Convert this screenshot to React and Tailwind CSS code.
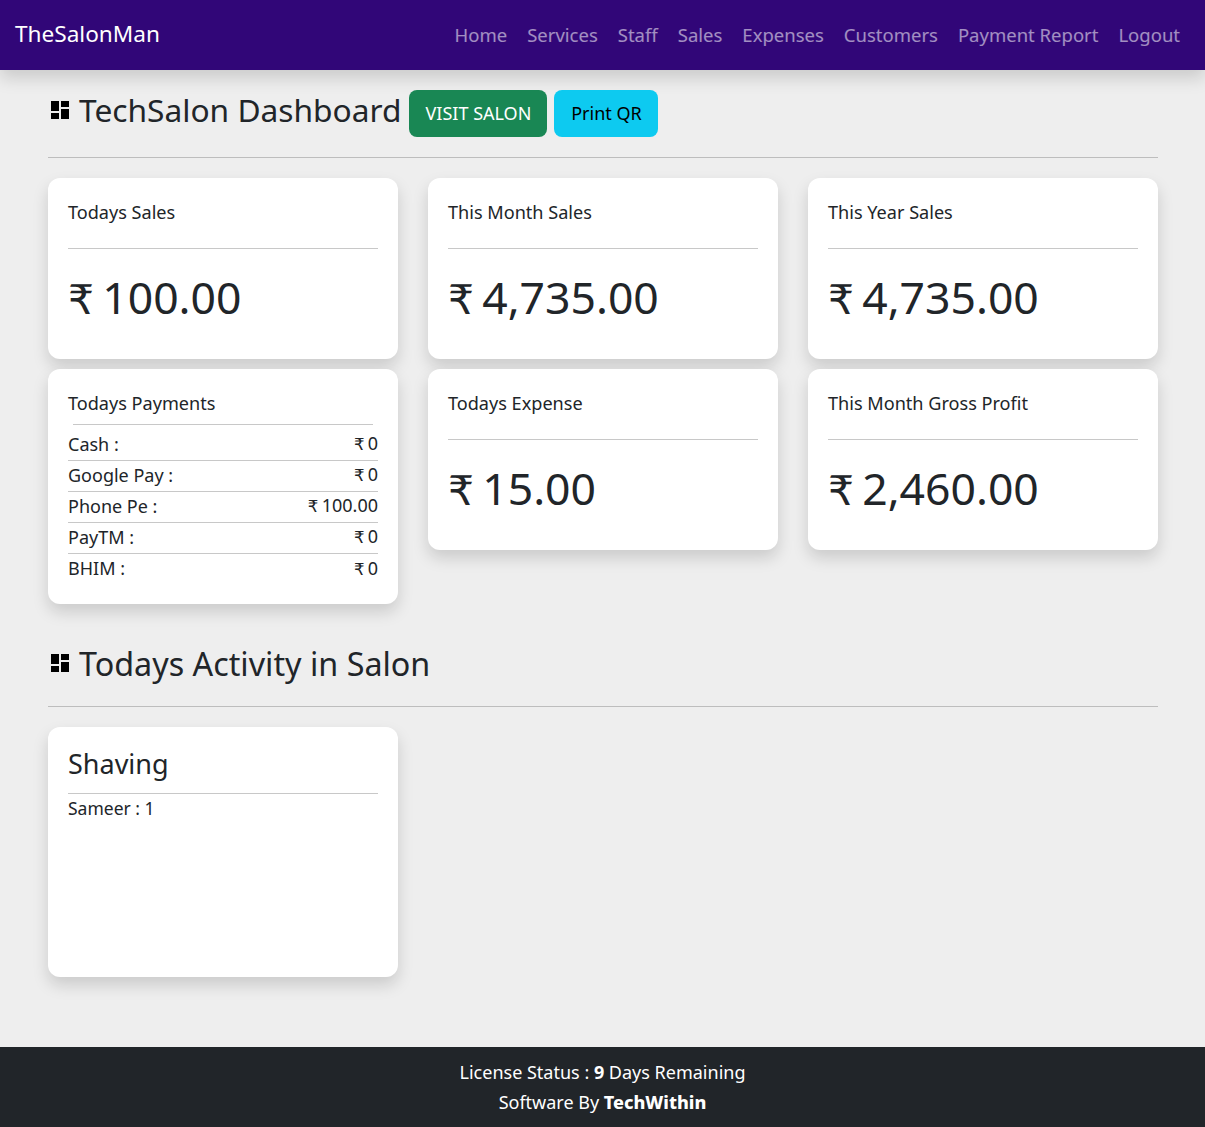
const NAV_LINKS = ['Home', 'Services', 'Staff', 'Sales', 'Expenses', 'Customers', 'Payment Report', 'Logout']

const PAYMENTS = [
  { label: 'Cash :', value: '0' },
  { label: 'Google Pay :', value: '0' },
  { label: 'Phone Pe :', value: '100.00' },
  { label: 'PayTM :', value: '0' },
  { label: 'BHIM :', value: '0' },
]

function DashIcon() {
  return (
    <svg viewBox="3 3 18 18" className="w-[18px] h-[18px] shrink-0 fill-black">
      <path d="M3 13h8V3H3v10zm0 8h8v-6H3v6zm10 0h8V11h-8v10zm0-18v6h8V3h-8z" />
    </svg>
  )
}

function Rupee() {
  return <span className="mr-[0.2em] font-['DejaVu_Sans',sans-serif] text-[0.92em]">₹</span>
}

function StatCard({ title, value }) {
  return (
    <div className="h-[181px] rounded-[12px] bg-white px-5 shadow-[0_8px_16px_rgba(0,0,0,0.15)]">
      <div className="h-[70px] pt-[21px] text-[18.1px] leading-[27px] text-[#212529]">{title}</div>
      <div className="border-t border-[#c8c8c8] pt-[20px] text-[44.5px] leading-[56px] text-[#212529]"><Rupee />{value}</div>
    </div>
  )
}

export default function App() {
  return (
    <div className="min-h-[1127px] bg-[#eeeeee] font-['Noto_Sans',sans-serif] text-[#212529]">
      {/* Navbar */}
      <nav className="flex h-[70px] items-center justify-between bg-[#310678] pl-[15px] pr-[25px] shadow-[0_8px_16px_rgba(0,0,0,0.15)]">
        <a className="mb-[3px] text-[22.6px] leading-[30px] text-white">TheSalonMan</a>
        <div className="flex gap-5">
          {NAV_LINKS.map((link) => (
            <a key={link} className="text-[18.5px] leading-[26px] text-white/55">{link}</a>
          ))}
        </div>
      </nav>

      <main className="ml-12 w-[1110px]">
        {/* Title */}
        <div className="flex h-[88px] items-start border-b border-[#bdbdbd] pt-5">
          <div className="flex h-[40px] items-center gap-[10px] pl-[3px]">
            <DashIcon />
            <h1 className="text-[31.7px] leading-[44px]">TechSalon Dashboard</h1>
          </div>
          <button className="ml-2 h-[47px] w-[138px] rounded-lg bg-[#198754] text-[18px] text-white">VISIT SALON</button>
          <button className="ml-[7px] h-[47px] w-[104px] rounded-lg bg-[#0dcaf0] text-[18px] text-black">Print QR</button>
        </div>

        {/* Stat cards */}
        <div className="mt-5 grid grid-cols-[repeat(3,350px)] items-start gap-x-[30px] gap-y-[10px]">
          <StatCard title="Todays Sales" value="100.00" />
          <StatCard title="This Month Sales" value="4,735.00" />
          <StatCard title="This Year Sales" value="4,735.00" />

          <div className="h-[235px] rounded-[12px] bg-white px-5 pt-[21px] shadow-[0_8px_16px_rgba(0,0,0,0.15)]">
            <div className="text-[18.1px] leading-[27px]">Todays Payments</div>
            <div className="mx-[5px] mb-[5px] mt-[7px] border-t border-[#c8c8c8]" />
            {PAYMENTS.map((p, i) => (
              <div key={p.label} className={`flex h-[31px] items-center justify-between pb-[2px] text-[18px] ${i < 4 ? 'border-b border-[#c8c8c8]' : ''}`}>
                <span>{p.label}</span>
                <span><Rupee />{p.value}</span>
              </div>
            ))}
          </div>
          <StatCard title="Todays Expense" value="15.00" />
          <StatCard title="This Month Gross Profit" value="2,460.00" />
        </div>

        {/* Activity */}
        <div className="flex h-[103px] items-start gap-[10px] border-b border-[#bdbdbd] pl-[3px] pt-[37px]">
          <div className="flex h-[44px] items-center gap-[10px]">
            <DashIcon />
            <h2 className="text-[32.3px] leading-[44px]">Todays Activity in Salon</h2>
          </div>
        </div>

        <div className="mt-5 h-[250px] w-[350px] rounded-[12px] bg-white px-5 shadow-[0_8px_16px_rgba(0,0,0,0.15)]">
          <div className="h-[67px] border-b border-[#c8c8c8] pt-[18px] text-[27px] leading-[38px]">Shaving</div>
          <div className="pt-[1px] text-[17.5px] leading-[27px]">Sameer : 1</div>
        </div>
      </main>

      {/* Footer */}
      <footer className="mt-[70px] flex h-[80px] flex-col items-center justify-center bg-[#212529] text-[18px] leading-[30px] text-white">
        <div>License Status : <b>9</b> Days Remaining</div>
        <div>Software By <b className="font-extrabold">TechWithin</b></div>
      </footer>
    </div>
  )
}
